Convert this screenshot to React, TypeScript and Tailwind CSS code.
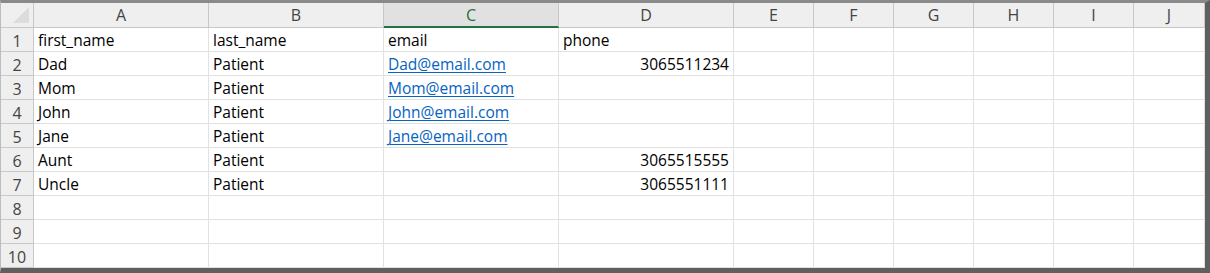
import React from "react";

const cols = ["A", "B", "C", "D", "E", "F", "G", "H", "I", "J"];

type Row = { first: string; last: string; email?: string; phone?: string };

const rows: Row[] = [
  { first: "first_name", last: "last_name", email: "email", phone: "phone" },
  { first: "Dad", last: "Patient", email: "Dad@email.com", phone: "3065511234" },
  { first: "Mom", last: "Patient", email: "Mom@email.com" },
  { first: "John", last: "Patient", email: "John@email.com" },
  { first: "Jane", last: "Patient", email: "Jane@email.com" },
  { first: "Aunt", last: "Patient", phone: "3065515555" },
  { first: "Uncle", last: "Patient", phone: "3065551111" },
  { first: "", last: "" },
  { first: "", last: "" },
  { first: "", last: "" },
];

const cell =
  "h-6 border-r border-b border-[#e1e1e1] px-1 pt-[3px] flex items-center whitespace-nowrap overflow-hidden text-[15.5px] text-black";

export default function App() {
  return (
    <div className="w-[1210px] h-[273px] bg-white overflow-hidden font-['Open_Sans',sans-serif]">
      <div className="h-full border-t-[3px] border-t-[#8a8a8a] border-r-[5px] border-r-[#5f5f5f] border-b-[5px] border-b-[#5f5f5f] border-l border-l-[#bdbdbd]">
        <div className="grid grid-cols-[33px_175px_175px_175px_175px_80px_80px_80px_80px_80px_1fr] grid-rows-[25px_repeat(10,24px)]">
          {/* header row */}
          <div className="relative bg-[#efefef] border-r border-b border-[#c8c8c8]">
            <svg className="absolute right-1 bottom-1" width="16" height="16" viewBox="0 0 16 16">
              <polygon points="16,0 16,16 0,16" fill="#dcdcdc" />
            </svg>
          </div>
          {cols.map((c) =>
            c === "C" ? (
              <div
                key={c}
                className="bg-[#e1e1e1] border-r border-[#c8c8c8] border-b-2 border-b-[#217346] flex items-center justify-center text-[16px] text-[#217346]"
              >
                {c}
              </div>
            ) : (
              <div
                key={c}
                className="bg-[#efefef] border-r border-b border-[#c8c8c8] flex items-center justify-center text-[16px] text-[#444]"
              >
                {c}
              </div>
            )
          )}

          {rows.map((r, i) => (
            <React.Fragment key={i}>
              <div className="h-6 bg-[#efefef] border-r border-b border-[#c8c8c8] pt-[3px] flex items-center justify-center text-[16px] text-[#444]">
                {i + 1}
              </div>
              <div className={cell}>{r.first}</div>
              <div className={cell}>{r.last}</div>
              <div className={cell}>
                {i === 0 ? (
                  r.email
                ) : r.email ? (
                  <span className="text-[#0563c1] underline underline-offset-2">{r.email}</span>
                ) : null}
              </div>
              <div className={`${cell} ${i === 0 ? "" : "justify-end"}`}>{r.phone}</div>
              {cols.slice(4).map((c) => (
                <div key={c} className={cell} />
              ))}
            </React.Fragment>
          ))}
        </div>
      </div>
    </div>
  );
}
